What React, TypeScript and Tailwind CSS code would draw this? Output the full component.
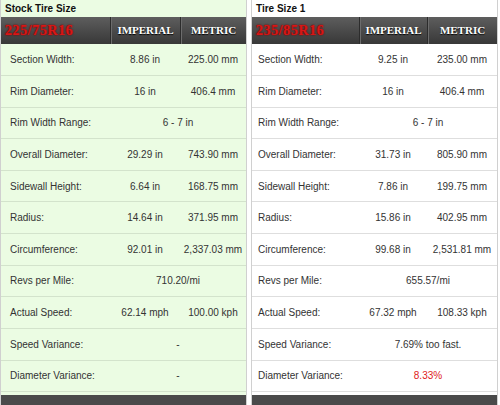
import React from "react";

type Row =
  | { label: string; imp: string; met: string }
  | { label: string; span: string; red?: boolean };

const leftRows: Row[] = [
  { label: "Section Width:", imp: "8.86 in", met: "225.00 mm" },
  { label: "Rim Diameter:", imp: "16 in", met: "406.4 mm" },
  { label: "Rim Width Range:", span: "6 - 7 in" },
  { label: "Overall Diameter:", imp: "29.29 in", met: "743.90 mm" },
  { label: "Sidewall Height:", imp: "6.64 in", met: "168.75 mm" },
  { label: "Radius:", imp: "14.64 in", met: "371.95 mm" },
  { label: "Circumference:", imp: "92.01 in", met: "2,337.03 mm" },
  { label: "Revs per Mile:", span: "710.20/mi" },
  { label: "Actual Speed:", imp: "62.14 mph", met: "100.00 kph" },
  { label: "Speed Variance:", span: "-" },
  { label: "Diameter Variance:", span: "-" },
];

const rightRows: Row[] = [
  { label: "Section Width:", imp: "9.25 in", met: "235.00 mm" },
  { label: "Rim Diameter:", imp: "16 in", met: "406.4 mm" },
  { label: "Rim Width Range:", span: "6 - 7 in" },
  { label: "Overall Diameter:", imp: "31.73 in", met: "805.90 mm" },
  { label: "Sidewall Height:", imp: "7.86 in", met: "199.75 mm" },
  { label: "Radius:", imp: "15.86 in", met: "402.95 mm" },
  { label: "Circumference:", imp: "99.68 in", met: "2,531.81 mm" },
  { label: "Revs per Mile:", span: "655.57/mi" },
  { label: "Actual Speed:", imp: "67.32 mph", met: "108.33 kph" },
  { label: "Speed Variance:", span: "7.69% too fast." },
  { label: "Diameter Variance:", span: "8.33%", red: true },
];

function Panel({
  title,
  size,
  rows,
  green,
  cols,
  labelPad,
}: {
  title: string;
  size: string;
  rows: Row[];
  green: boolean;
  cols: string;
  labelPad: string;
}) {
  const bg = green ? "bg-[#ebfce3]" : "bg-white";
  const line = green ? "border-[#d3e3cc]" : "border-[#dedede]";
  return (
    <div className={`w-[247px] border-x border-[#d0d0d0] ${bg} flex flex-col`}>
      <div className="h-[17px] pl-[4px] flex items-center text-[10px] font-bold text-[#111] font-['Liberation_Sans',Arial,sans-serif]">
        {title}
      </div>
      <div
        className={`h-[28px] grid ${cols} bg-gradient-to-b from-[#5e5e5e] to-[#383838] font-['Liberation_Serif','Times_New_Roman',serif] font-bold`}
      >
        <div className="flex items-center pl-[4px] text-[14px] tracking-[0.6px] text-[#d81818] [text-shadow:0_0_2px_#600,0_0_1px_#c00]">
          {size}
        </div>
        <div className="flex items-center justify-center text-[11px] text-white border-l border-[#2c2c2c] shadow-[inset_1px_0_0_#6c6c6c] [text-shadow:0_1px_1px_#000]">
          IMPERIAL
        </div>
        <div className="flex items-center justify-center text-[11px] text-white border-l border-[#2c2c2c] shadow-[inset_1px_0_0_#6c6c6c] [text-shadow:0_1px_1px_#000]">
          METRIC
        </div>
      </div>
      {rows.map((r) => (
        <div
          key={r.label}
          className={`h-[32px] grid ${cols} border-b ${line} text-[10px] text-[#333] font-['Liberation_Sans',Arial,sans-serif]`}
        >
          <div className={`flex items-center ${labelPad}`}>{r.label}</div>
          {"span" in r ? (
            <div
              className={`col-span-2 flex items-center justify-center ${
                r.red ? "text-[#e02020]" : ""
              }`}
            >
              {r.span}
            </div>
          ) : (
            <>
              <div className="flex items-center justify-center">{r.imp}</div>
              <div className="flex items-center justify-center">{r.met}</div>
            </>
          )}
        </div>
      ))}
      <div className="mt-[3px] h-[10px] bg-[#4a4a4a]" />
    </div>
  );
}

export default function App() {
  return (
    <div className="w-[500px] h-[405px] overflow-hidden bg-white flex gap-[4px]">
      <Panel
        title="Stock Tire Size"
        size="225/75R16"
        rows={leftRows}
        green
        cols="grid-cols-[109px_70px_1fr]"
        labelPad="pl-[9px]"
      />
      <Panel
        title="Tire Size 1"
        size="235/85R16"
        rows={rightRows}
        green={false}
        cols="grid-cols-[107px_68px_1fr]"
        labelPad="pl-[6px]"
      />
    </div>
  );
}
